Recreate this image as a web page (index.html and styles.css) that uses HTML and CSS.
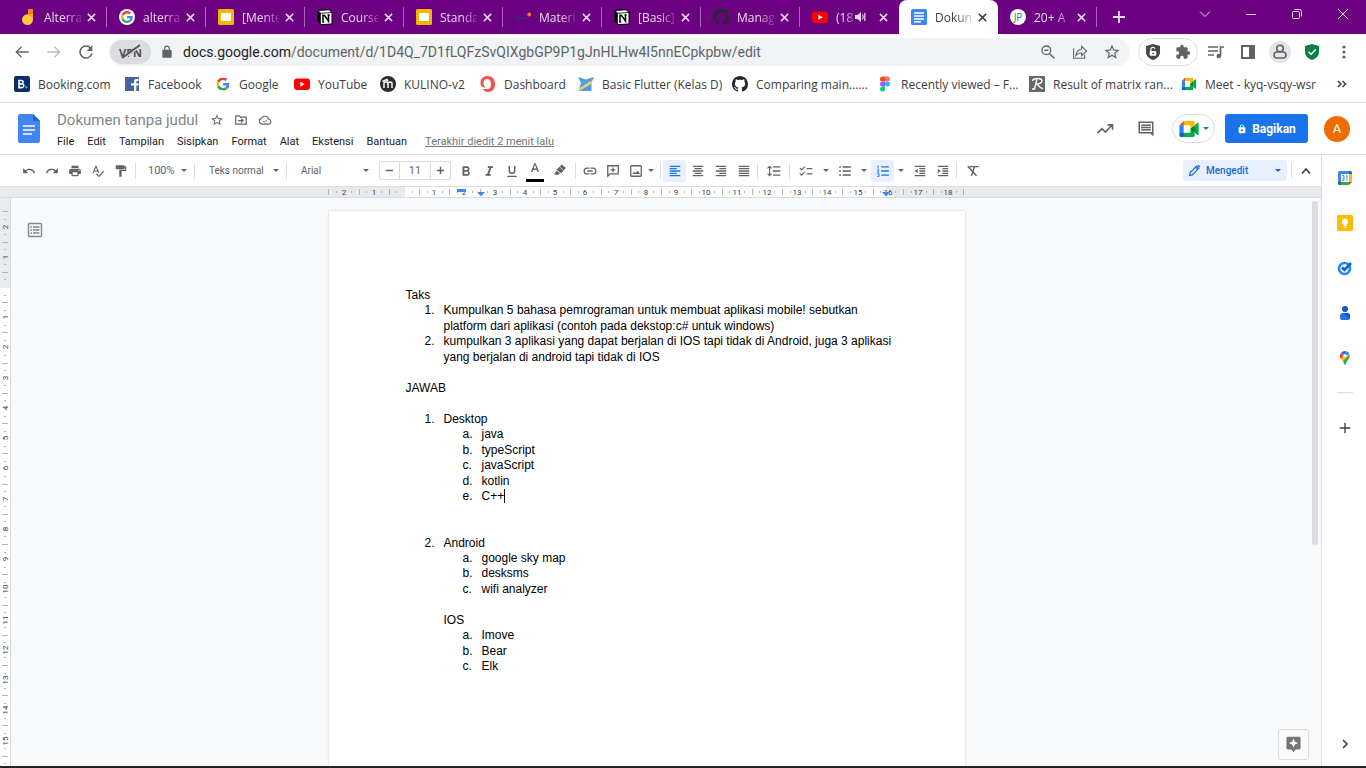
FILE: index.html
```html
<!DOCTYPE html>
<html lang="id">
<head>
<meta charset="utf-8">
<title>Dokumen tanpa judul</title>
<link rel="stylesheet" href="styles.css">
</head>
<body>
<svg class="sprites" aria-hidden="true">
  <symbol id="close" viewBox="0 0 10 10"><path d="M1 1l8 8M9 1L1 9" stroke="currentColor" stroke-width="1.7"/></symbol>
  <symbol id="google" viewBox="0 0 48 48"><path fill="#EA4335" d="M24 9.500c3.500 0 6.700 1.200 9.200 3.600l6.900-6.900C35.900 2.400 30.500 0 24 0 14.600 0 6.500 5.400 2.600 13.200l8 6.200C12.400 13.700 17.700 9.500 24 9.500z"/><path fill="#4285F4" d="M47 24.600c0-1.600-.2-3.100-.4-4.600H24v9h12.900c-.6 3-2.300 5.500-4.800 7.200l7.700 6C44.400 38 47 31.800 47 24.600z"/><path fill="#FBBC05" d="M10.500 28.600A14.500 14.500 0 0 1 10.500 19.400l-8-6.200a24 24 0 0 0 0 21.600z"/><path fill="#34A853" d="M24 48c6.500 0 11.900-2.100 15.900-5.800l-7.700-6c-2.200 1.500-4.900 2.300-8.200 2.300-6.300 0-11.600-4.200-13.500-9.900l-8 6.200C6.500 42.600 14.600 48 24 48z"/></symbol>
  <symbol id="slides" viewBox="0 0 16 16"><rect width="16" height="16" rx="1.500" fill="#f4b400"/><rect x="3" y="4" width="10" height="8" fill="#fff"/></symbol>
  <symbol id="notion" viewBox="0 0 16 16"><path d="M1 2.200L2.500 1l9.500-.5L15 3v12l-11 .6L1 12.500z" fill="#fff" stroke="#000" stroke-width="1"/><path d="M1 2v10.500L3.800 15.600V4z" fill="#000"/><path d="M1 1.700L12 .8l3 2.700-11 .8z" fill="#fff" stroke="#000" stroke-width=".8"/><path d="M6 13V6.500h1.600l3.900 5.700V6.200M5.200 13h2M5.200 6.300h2M10.500 6h2.200" stroke="#000" stroke-width="1.500" fill="none"/></symbol>
  <symbol id="youtube" viewBox="0 0 16 16"><rect y="2.500" width="16" height="11.500" rx="3" fill="#f00"/><path d="M6.400 5.700v5l4.300-2.500z" fill="#fff"/></symbol>
  <symbol id="github" viewBox="0 0 16 16"><path fill="#24292f" d="M8 0C3.580 0 0 3.580 0 8c0 3.540 2.290 6.530 5.470 7.590.4.070.55-.17.55-.38 0-.19-.01-.82-.01-1.490-2.010.37-2.530-.49-2.690-.94-.09-.23-.48-.94-.82-1.130-.28-.15-.68-.52-.01-.53.63-.01 1.080.58 1.230.82.72 1.210 1.870.87 2.330.66.070-.52.280-.87.510-1.070-1.780-.2-3.640-.89-3.640-3.950 0-.87.310-1.590.82-2.150-.08-.2-.36-1.020.08-2.120 0 0 .67-.21 2.200.82.64-.18 1.320-.27 2-.27s1.360.09 2 .27c1.530-1.040 2.200-.82 2.200-.82.44 1.100.16 1.920.08 2.120.51.56.82 1.270.82 2.150 0 3.070-1.870 3.750-3.650 3.950.29.25.54.73.54 1.480 0 1.070-.01 1.930-.01 2.200 0 .21.150.46.550.38A8.010 8.010 0 0 0 16 8c0-4.420-3.580-8-8-8z"/></symbol>
  <symbol id="docs" viewBox="0 0 16 16"><rect width="16" height="16" rx="1.500" fill="#4285f4"/><path d="M3 4h10M3 7h10M3 10h10M3 12.800h7" stroke="#fff" stroke-width="1.400"/></symbol>
  <symbol id="meet" viewBox="0 0 24 20"><path fill="#00832d" d="M13.500 10l2.400 2.700 3.200 2 .6-4.700-.6-4.600-3.200 1.800z"/><path fill="#0066da" d="M0 14.500v4c0 .9.700 1.500 1.500 1.500h4l.9-3-.9-2.500-2.800-.9z"/><path fill="#e94235" d="M5.500 0L0 5.500l2.800.8 2.700-.8.900-2.800z"/><path fill="#2684fc" d="M0 5.500h5.500v9H0z"/><path fill="#00ac47" d="M22.600 2.400l-3.500 2.900v9.400l3.500 2.900c.6.400 1.400 0 1.400-.7V3c0-.7-.8-1.100-1.400-.6zM13.500 10v4.500h-8V20h12.100c.8 0 1.500-.7 1.500-1.500v-3.800z"/><path fill="#ffba00" d="M17.600 0H5.500v5.500h8V10l5.600-4.600V1.500c0-.8-.7-1.500-1.500-1.500z"/><path fill="#fff" d="M5.500 5.500h8v9h-8z"/></symbol>
  <symbol id="star" viewBox="0 0 24 24"><path fill="currentColor" d="M22 9.240l-7.190-.62L12 2 9.190 8.630 2 9.240l5.460 4.730L5.820 21 12 17.270 18.180 21l-1.630-7.030L22 9.240zM12 15.400l-3.760 2.270 1-4.280-3.320-2.880 4.380-.38L12 6.100l1.710 4.040 4.380.38-3.320 2.880 1 4.280L12 15.400z"/></symbol>
  <symbol id="lock" viewBox="0 0 24 24"><path fill="currentColor" d="M18 8h-1V6A5 5 0 0 0 7 6v2H6a2 2 0 0 0-2 2v10c0 1.100.9 2 2 2h12a2 2 0 0 0 2-2V10a2 2 0 0 0-2-2zM9 6a3 3 0 0 1 6 0v2H9z"/></symbol>
  <symbol id="share-lock" viewBox="0 0 24 24"><path fill="currentColor" fill-rule="evenodd" d="M18 8h-1V6A5 5 0 0 0 7 6v2H6a2 2 0 0 0-2 2v10c0 1.100.9 2 2 2h12a2 2 0 0 0 2-2V10a2 2 0 0 0-2-2zM9 6a3 3 0 0 1 6 0v2H9zM12 12.500a2.500 2.500 0 1 1 0 5 2.500 2.500 0 0 1 0-5z"/></symbol>
  <symbol id="add" viewBox="0 0 24 24"><path fill="currentColor" d="M20 13h-7v7h-2v-7H4v-2h7V4h2v7h7z"/></symbol>
</svg>

<header class="browser">
  <nav class="tabs" aria-label="Tab">
    <div class="tab"><svg class="fav" viewBox="0 0 16 16"><path d="M8 0h5v7L8 6z" fill="#ff7a1a"/><path d="M2 10.500A5.500 5.500 0 0 1 7.500 5.200H13v5.300a5.500 5.500 0 0 1-11 0z" fill="#fdc843"/><path d="M8 5.200h5v5z" fill="#ff9d2e"/></svg><span class="tab-title">Alterra</span><button aria-label="Tutup"><svg><use href="#close"/></svg></button></div>
    <div class="tab"><svg class="fav" viewBox="0 0 16 16"><circle cx="8" cy="8" r="8" fill="#fff"/><use href="#google" x="2" y="2" width="12" height="12"/></svg><span class="tab-title">alterra</span><button aria-label="Tutup"><svg><use href="#close"/></svg></button></div>
    <div class="tab"><svg class="fav"><use href="#slides"/></svg><span class="tab-title">[Mente</span><button aria-label="Tutup"><svg><use href="#close"/></svg></button></div>
    <div class="tab"><svg class="fav"><use href="#notion"/></svg><span class="tab-title">Course</span><button aria-label="Tutup"><svg><use href="#close"/></svg></button></div>
    <div class="tab"><svg class="fav"><use href="#slides"/></svg><span class="tab-title">Standa</span><button aria-label="Tutup"><svg><use href="#close"/></svg></button></div>
    <div class="tab"><svg class="fav" viewBox="0 0 16 16"><path d="M0 9h12" stroke="#3f2479" stroke-width="2.500" stroke-dasharray="2.500 .7"/><circle cx="14.200" cy="5.500" r="1.900" fill="#ff7a1a"/></svg><span class="tab-title">Materi</span><button aria-label="Tutup"><svg><use href="#close"/></svg></button></div>
    <div class="tab"><svg class="fav"><use href="#notion"/></svg><span class="tab-title">[Basic]</span><button aria-label="Tutup"><svg><use href="#close"/></svg></button></div>
    <div class="tab"><svg class="fav"><use href="#github"/></svg><span class="tab-title">Manag</span><button aria-label="Tutup"><svg><use href="#close"/></svg></button></div>
    <div class="tab tab-audio"><svg class="fav"><use href="#youtube"/></svg><span class="tab-title">(18</span><svg class="speaker" viewBox="0 0 12 12"><path d="M0 4h2.500L6 1v10L2.500 8H0z" fill="currentColor"/><path d="M7.500 3.500q1.600 2.500 0 5M9.800 2v8" stroke="currentColor" stroke-width="1.200" fill="none"/></svg><button aria-label="Tutup"><svg><use href="#close"/></svg></button></div>
    <div class="tab tab-active"><svg class="fav"><use href="#docs"/></svg><span class="tab-title">Dokun</span><button aria-label="Tutup"><svg><use href="#close"/></svg></button></div>
    <div class="tab"><span class="fav-jp">JP</span><span class="tab-title">20+ A</span><button aria-label="Tutup"><svg><use href="#close"/></svg></button></div>
    <button class="new-tab" aria-label="Tab baru"><svg viewBox="0 0 12 12"><path d="M6 0v12M0 6h12" stroke="currentColor" stroke-width="1.800"/></svg></button>
    <div class="window-controls">
      <button aria-label="Telusuri tab"><svg viewBox="0 0 12 12"><path d="M1 3.500l5 5 5-5" fill="none" stroke="currentColor"/></svg></button>
      <button aria-label="Minimalkan"><svg viewBox="0 0 12 12"><path d="M1 6.500h10" stroke="currentColor"/></svg></button>
      <button aria-label="Pulihkan"><svg viewBox="0 0 12 12"><rect x="1.500" y="3.500" width="7" height="7" rx="1" fill="none" stroke="currentColor"/><path d="M3.500 1.500h5a2 2 0 0 1 2 2v5" fill="none" stroke="currentColor"/></svg></button>
      <button aria-label="Tutup jendela"><svg viewBox="0 0 12 12"><path d="M1 1l10 10M11 1L1 11" stroke="currentColor"/></svg></button>
    </div>
  </nav>

  <div class="address-row">
    <button aria-label="Kembali"><svg viewBox="0 0 24 24"><path fill="currentColor" d="M22 11H5.830l6.200-6.200L10.600 3.400 2 12l8.600 8.600 1.400-1.400L5.830 13H22z"/></svg></button>
    <button class="faded" aria-label="Maju"><svg viewBox="0 0 24 24"><path fill="currentColor" d="M2 11h16.170l-6.200-6.200 1.430-1.400L22 12l-8.600 8.600-1.400-1.400 6.170-6.200H2z"/></svg></button>
    <button aria-label="Muat ulang"><svg viewBox="0 0 24 24"><path d="M18.800 6.200A9 9 0 1 0 20.800 14" fill="none" stroke="currentColor" stroke-width="2.300"/><path d="M21.500 2v8.500H13z" fill="currentColor"/></svg></button>
    <div class="omnibox">
      <button class="vpn" aria-label="VPN"><span>VPN</span><svg viewBox="0 0 24 16"><path d="M3 15L22 1" stroke="#dadce0" stroke-width="3"/><path d="M3 14L21 1" stroke="#4b4d51" stroke-width="1.600"/></svg></button>
      <svg class="lock"><use href="#lock"/></svg>
      <div class="url" role="textbox" aria-label="Alamat" contenteditable="true" spellcheck="false"><span>docs.google.com</span>/document/d/1D4Q_7D1fLQFzSvQIXgbGP9P1gJnHLHw4I5nnECpkpbw/edit</div>
      <button aria-label="Zoom"><svg viewBox="0 0 24 24"><circle cx="9.500" cy="9.500" r="6.500" fill="none" stroke="currentColor" stroke-width="2"/><path d="M6.500 9.500h6M14.500 14.500l7 7" stroke="currentColor" stroke-width="2.200"/></svg></button>
      <button aria-label="Bagikan halaman"><svg viewBox="0 0 24 24"><path d="M2.500 6.500v15H19v-5" fill="none" stroke="currentColor" stroke-width="1.600"/><path d="M14.500 3.500l7.500 7-7.500 7v-4c-4 0-6.500.8-8.500 3.500.6-5 3.500-8.800 8.500-9.500z" fill="none" stroke="currentColor" stroke-width="1.600"/></svg></button>
      <button aria-label="Tandai halaman"><svg class="large"><use href="#star"/></svg></button>
    </div>
    <div class="extension-pill">
      <button aria-label="Pemblokir"><svg viewBox="0 0 16 16"><path d="M8 0l7 2v6c0 4-3 6.500-7 8-4-1.500-7-4-7-8V2z" fill="#44474b"/><rect x="4.700" y="7" width="6.600" height="4.800" rx="1" fill="#fff"/><path d="M5.800 7V5.500a2.200 2.200 0 0 1 4.200-.8" fill="none" stroke="#fff" stroke-width="1.200"/><path d="M7 9.400h2" stroke="#44474b"/></svg></button>
      <button aria-label="Ekstensi"><svg viewBox="0 0 24 24"><path fill="currentColor" d="M20.500 11H19V7c0-1.100-.9-2-2-2h-4V3.500a2.500 2.500 0 0 0-5 0V5H4a2 2 0 0 0-2 2v3.800h1.500a2.700 2.700 0 0 1 0 5.400H2V20c0 1.100.9 2 2 2h3.800v-1.500a2.700 2.700 0 0 1 5.400 0V22H17a2 2 0 0 0 2-2v-4h1.500a2.500 2.500 0 0 0 0-5z"/></svg></button>
    </div>
    <div class="browser-actions">
      <button aria-label="Media"><svg viewBox="0 0 16 16"><path d="M0 3h10M0 7h10M0 11h6" stroke="currentColor" stroke-width="1.700"/><path d="M12.500 12V3H16" fill="none" stroke="currentColor" stroke-width="1.700"/><circle cx="10.800" cy="12" r="2.300" fill="currentColor"/></svg></button>
      <button aria-label="Panel samping"><svg viewBox="0 0 16 16"><rect x="2" y="2" width="12" height="12" fill="none" stroke="currentColor" stroke-width="2"/><path d="M9 2h5v12H9z" fill="currentColor"/></svg></button>
      <button aria-label="Profil"><svg class="profile" viewBox="0 0 22 22"><circle cx="11" cy="11" r="11" fill="#e3e4e8"/><circle cx="11" cy="7.500" r="3.300" fill="none" stroke="currentColor" stroke-width="1.600"/><rect x="5" y="11" width="12" height="6" rx="3" fill="none" stroke="currentColor" stroke-width="1.600"/></svg></button>
      <button aria-label="Perlindungan"><svg viewBox="0 0 16 16"><path d="M8 0l7 2v6c0 4-3 6.500-7 8-4-1.500-7-4-7-8V2z" fill="#0b8043"/><path d="M4.500 7.700l2.600 2.600 4.500-4.700" fill="none" stroke="#fff" stroke-width="1.500"/></svg></button>
      <button aria-label="Menu"><svg viewBox="0 0 16 16"><circle cx="8" cy="3" r="1.600" fill="currentColor"/><circle cx="8" cy="8" r="1.600" fill="currentColor"/><circle cx="8" cy="13" r="1.600" fill="currentColor"/></svg></button>
    </div>
  </div>

  <nav class="bookmarks" aria-label="Bookmark">
    <a href="#"><svg viewBox="0 0 16 16"><rect width="16" height="16" rx="2" fill="#0c2c6b"/><path d="M5 4.500h2.400a1.600 1.600 0 0 1 0 3.400H5zm0 3.400h2.900a1.800 1.800 0 0 1 0 3.700H5z" fill="none" stroke="#fff" stroke-width="1.600"/><circle cx="12.300" cy="11.300" r="1.200" fill="#18a5f5"/></svg>Booking.com</a>
    <a href="#"><svg viewBox="0 0 16 16"><rect x="1" y="1" width="14" height="14" fill="#4862a3"/><path d="M10 15V9.500H7V7.200h3V5.800c0-2.200 1.300-3.300 4.500-3v2.100c-1.700-.1-2.200.2-2.200 1.200v1.100h2.200v2.300h-2.200V15z" fill="#fff"/></svg>Facebook</a>
    <a href="#"><svg viewBox="-5 -5 58 58"><use href="#google" width="48" height="48"/></svg>Google</a>
    <a href="#"><svg><use href="#youtube"/></svg>YouTube</a>
    <a href="#"><svg viewBox="0 0 16 16"><circle cx="8" cy="8" r="8" fill="#2b2b2b"/><path d="M4 12V7.500q0-1.500 2-1.500t2 1.500V12M8 7.500Q8 6 10 6t2 1.500V12M2.500 5.500L7 3.500l1 1.500" fill="none" stroke="#fff" stroke-width="1.500"/></svg>KULINO-v2</a>
    <a href="#"><svg viewBox="0 0 16 16"><path fill="#f0544a" fill-rule="evenodd" d="M7.500 0C12 0 15 3 15 8s-2.500 8-7 8c-3 0-4.500-1.500-5-3h4c3 0 4-2 4-5s-1.500-5-4-5-3.500 1.500-3.500 4 1 3.500 2 4.500C2 11.500.5 9.500.5 7 .5 3 3 0 7.500 0z"/></svg>Dashboard</a>
    <a href="#"><svg viewBox="0 0 16 16"><path d="M0 1l8 2.500L16 1l-2.500 5.500V15h-13L3 7z" fill="#4c9fe2"/><path d="M1 12.500L13.500 4.500v3.200L1 15z" fill="#f7cf70"/></svg>Basic Flutter (Kelas D)</a>
    <a href="#"><svg><use href="#github"/></svg>Comparing main......</a>
    <a href="#"><svg viewBox="0 0 16 16"><path d="M5.500.5H8v5H5.500a2.500 2.500 0 0 1 0-5z" fill="#f24e1e"/><path d="M8 .5h2.500a2.500 2.500 0 0 1 0 5H8z" fill="#ff7262"/><path d="M5.500 5.500H8v5H5.500a2.500 2.500 0 0 1 0-5z" fill="#a259ff"/><circle cx="10.500" cy="8" r="2.500" fill="#1abcfe"/><path d="M5.500 10.500H8V13a2.500 2.500 0 1 1-2.500-2.500z" fill="#0acf83"/></svg>Recently viewed – F...</a>
    <a href="#"><svg viewBox="0 0 16 16"><rect width="16" height="16" fill="#66676b"/><path d="M3.500 5C3.500 3 6 2.500 9 2.500S13 3.500 13 5 10.500 8 7.500 8c2 0 3 5 6.500 4.500M8 3L5.500 13H3" fill="none" stroke="#fff" stroke-width="1.400"/></svg>Result of matrix ran...</a>
    <a href="#"><svg viewBox="-1 -3 26 26"><use href="#meet" width="24" height="20"/></svg>Meet - kyq-vsqy-wsr</a>
    <button aria-label="Bookmark lainnya"><svg viewBox="0 0 12 12"><path d="M2 3l3 3-3 3M6.500 3l3 3-3 3" fill="none" stroke="currentColor" stroke-width="1.500"/></svg></button>
  </nav>
</header>

<header class="doc-header">
  <svg class="doc-logo" viewBox="0 0 22 29"><path d="M2 0h13l7 7v20a2 2 0 0 1-2 2H2a2 2 0 0 1-2-2V2a2 2 0 0 1 2-2z" fill="#4285f4"/><path d="M15 0l7 7h-7z" fill="#1967d2"/><path d="M5 12h12M5 16h12M5 20h9" stroke="#fff" stroke-width="1.600"/></svg>
  <div class="doc-heading">
    <div class="title-row">
      <input class="doc-title" type="text" value="Dokumen tanpa judul" aria-label="Nama dokumen" spellcheck="false">
      <button aria-label="Bintangi"><svg><use href="#star"/></svg></button>
      <button aria-label="Pindahkan"><svg viewBox="0 0 24 24"><path d="M3 5h6l2 2h10v12H3z" fill="none" stroke="currentColor" stroke-width="2"/><path d="M7 13h7M12 9.500l3.500 3.500-3.500 3.500" fill="none" stroke="currentColor" stroke-width="2"/></svg></button>
      <button aria-label="Status dokumen"><svg viewBox="0 0 24 24"><path d="M7 19a5 5 0 0 1-1-9.800 6.500 6.500 0 0 1 12.200 1.300A4.300 4.300 0 0 1 18.500 19z" fill="none" stroke="currentColor" stroke-width="1.900"/><path d="M8.500 13.500l2.500 2.500 4.500-4.500" fill="none" stroke="currentColor" stroke-width="1.700"/></svg></button>
    </div>
    <nav class="menus">
      <button>File</button><button>Edit</button><button>Tampilan</button><button>Sisipkan</button><button>Format</button><button>Alat</button><button>Ekstensi</button><button>Bantuan</button>
      <a href="#">Terakhir diedit 2 menit lalu</a>
    </nav>
  </div>
  <div class="doc-actions">
    <button class="icon-action" aria-label="Aktivitas"><svg viewBox="0 0 24 24"><path d="M2 17.500l6-6 4.500 4.500L21 7M15.500 6.500H22V13" fill="none" stroke="currentColor" stroke-width="2.200"/></svg></button>
    <button class="icon-action" aria-label="Komentar"><svg viewBox="0 0 24 24"><path d="M2 2h20v20l-4-4H2z" fill="currentColor"/><path d="M4 4h16v12H4z" fill="#fff"/><path d="M5.500 7h13M5.500 10h13M5.500 13h13" stroke="currentColor" stroke-width="2"/></svg></button>
    <button class="meet-button" aria-label="Meet"><svg><use href="#meet"/></svg><i class="caret"></i></button>
    <button class="share"><svg><use href="#share-lock"/></svg>Bagikan</button>
    <button class="avatar" aria-label="Akun">A</button>
  </div>
</header>

<div class="app">
  <main class="editor">
    <div class="toolbar" role="toolbar" aria-label="Format">
      <button class="tool" aria-label="Urungkan"><svg viewBox="0 0 24 24"><path fill="currentColor" d="M12.500 8c-2.650 0-5.050.99-6.900 2.600L2 7v9h9l-3.620-3.620A7.970 7.970 0 0 1 20.080 16l2.370-.78A10.500 10.500 0 0 0 12.500 8z"/></svg></button>
      <button class="tool" aria-label="Ulangi"><svg viewBox="0 0 24 24"><path fill="currentColor" d="M18.400 10.600A10.450 10.450 0 0 0 1.540 15.220L3.900 16a8 8 0 0 1 12.720-3.620L13 16h9V7z"/></svg></button>
      <button class="tool" aria-label="Cetak"><svg viewBox="0 0 24 24"><path fill="currentColor" d="M19 8H5a3 3 0 0 0-3 3v6h4v4h12v-4h4v-6a3 3 0 0 0-3-3zm-3 11H8v-5h8zm3-7a1 1 0 1 1 0-2 1 1 0 0 1 0 2zM18 3H6v4h12z"/></svg></button>
      <button class="tool" aria-label="Ejaan"><svg viewBox="0 0 24 24"><path fill="currentColor" d="M12.450 16h2.090L9.430 3H7.570L2.460 16h2.090l1.120-3h5.640zm-6.020-5L8.500 5.480 10.570 11zm15.160.59l-8.090 8.090L9.830 16l-1.410 1.410 5.090 5.090L23 13z"/></svg></button>
      <button class="tool" aria-label="Cat format"><svg viewBox="0 0 24 24"><path fill="currentColor" d="M18 4V3a1 1 0 0 0-1-1H4a1 1 0 0 0-1 1v5a1 1 0 0 0 1 1h13a1 1 0 0 0 1-1V6h1v4H9v11a1 1 0 0 0 1 1h2a1 1 0 0 0 1-1v-9h8V4z"/></svg></button>
      <i class="sep sep-first"></i>
      <label class="picker picker-zoom"><select aria-label="Zoom"><option>100%</option></select><i class="caret"></i></label>
      <i class="sep"></i>
      <label class="picker picker-style"><select aria-label="Gaya"><option>Teks normal</option></select><i class="caret"></i></label>
      <i class="sep"></i>
      <label class="picker picker-font"><select aria-label="Font"><option>Arial</option></select><i class="caret"></i></label>
      <div class="font-size"><button aria-label="Perkecil"><svg viewBox="0 0 12 12"><path d="M2 6h8" stroke="currentColor" stroke-width="1.600"/></svg></button><input type="text" value="11" aria-label="Ukuran font"><button aria-label="Perbesar"><svg viewBox="0 0 12 12"><path d="M2 6h8M6 2v8" stroke="currentColor" stroke-width="1.600"/></svg></button></div>
      <button class="tool" aria-label="Tebal"><svg viewBox="0 0 24 24"><path fill="currentColor" d="M16.500 11.800A4.400 4.400 0 0 0 14.200 4H6v16h9a4.500 4.500 0 0 0 1.500-8.200zM9.300 6.800h4a1.700 1.700 0 0 1 0 3.400h-4zm4.500 10.400H9.300v-4.100h4.500a2 2 0 0 1 0 4.100z"/></svg></button>
      <button class="tool" aria-label="Miring"><svg viewBox="0 0 24 24"><path fill="currentColor" d="M10 4v2.800h2.600L8.900 17.200H6V20h9v-2.800h-2.700L16 6.800h3V4z"/></svg></button>
      <button class="tool" aria-label="Garis bawah"><svg viewBox="0 0 24 24"><path fill="currentColor" d="M12 17a6 6 0 0 0 6-6V3h-2.500v8a3.500 3.500 0 0 1-7 0V3H6v8a6 6 0 0 0 6 6zM4 20v2.200h16V20z"/></svg></button>
      <button class="tool text-color" aria-label="Warna teks"><svg viewBox="0 0 24 24"><path fill="currentColor" d="M10.800 2L5 17h2.500l1.300-3.500h6.400l1.300 3.500H19L13.200 2zM9.600 11.300L12 4.900l2.400 6.400z"/></svg></button>
      <button class="tool tool-list" aria-label="Sorot"><svg viewBox="0 0 24 24"><path d="M15 1l7 6-8 9-8-6z" fill="currentColor"/><path d="M12 5.500l5.500 5" stroke="#fff" stroke-width="1.200"/><path d="M6 11l6 5-3 2.500H2z" fill="currentColor"/></svg></button>
      <i class="sep"></i>
      <button class="tool" aria-label="Tautan"><svg viewBox="0 0 24 24"><path d="M11 7H7a5 5 0 0 0 0 10h4M13 7h4a5 5 0 0 1 0 10h-4M7.500 12h9" fill="none" stroke="currentColor" stroke-width="2.200"/></svg></button>
      <button class="tool" aria-label="Tambah komentar"><svg viewBox="0 0 24 24"><path d="M3 21V3h18v14H7z" fill="none" stroke="currentColor" stroke-width="2.200"/><path d="M12 6v8M8 10h8" stroke="currentColor" stroke-width="2.200"/></svg></button>
      <button class="tool tool-menu" aria-label="Gambar"><svg viewBox="0 0 24 24"><rect x="3" y="3" width="18" height="18" rx="1.500" fill="none" stroke="currentColor" stroke-width="2.200"/><path d="M6 17l3-4 2.500 2.500L15 11l4 6z" fill="currentColor"/></svg><i class="caret"></i></button>
      <i class="sep"></i>
      <button class="tool active" aria-label="Rata kiri"><svg viewBox="0 0 24 24"><path d="M3 4h18M3 8h12M3 12h18M3 16h12M3 20h18" stroke="currentColor" stroke-width="2.200"/></svg></button>
      <button class="tool" aria-label="Rata tengah"><svg viewBox="0 0 24 24"><path d="M3 4h18M6 8h12M3 12h18M6 16h12M3 20h18" stroke="currentColor" stroke-width="2.200"/></svg></button>
      <button class="tool" aria-label="Rata kanan"><svg viewBox="0 0 24 24"><path d="M3 4h18M9 8h12M3 12h18M9 16h12M3 20h18" stroke="currentColor" stroke-width="2.200"/></svg></button>
      <button class="tool" aria-label="Rata kiri-kanan"><svg viewBox="0 0 24 24"><path d="M3 4h18M3 8h18M3 12h18M3 16h18M3 20h18" stroke="currentColor" stroke-width="2.200"/></svg></button>
      <i class="sep"></i>
      <button class="tool tool-list" aria-label="Spasi baris"><svg viewBox="0 0 24 24"><path d="M10 5h13M10 12h13M10 19h13" stroke="currentColor" stroke-width="2.400"/><path d="M4.500 5v14M1 7.500L4.500 4 8 7.500M1 16.500L4.500 20 8 16.500" fill="none" stroke="currentColor" stroke-width="1.900"/></svg></button>
      <i class="sep"></i>
      <button class="tool tool-list" aria-label="Checklist"><svg viewBox="0 0 24 24"><path d="M13 8h10M13 17h10M1.500 7l3 3L10 4.500M1.500 16l3 3 5.500-5.500" fill="none" stroke="currentColor" stroke-width="2"/></svg></button>
      <button class="arrow" aria-label="Opsi checklist"><i class="caret"></i></button>
      <button class="tool tool-bullets" aria-label="Daftar berbutir"><svg viewBox="0 0 24 24"><path d="M8 5h14M8 12h14M8 19h14M2 5h3M2 12h3M2 19h3" stroke="currentColor" stroke-width="2.600"/></svg></button>
      <button class="arrow" aria-label="Opsi butir"><i class="caret"></i></button>
      <button class="tool active" aria-label="Daftar bernomor"><svg viewBox="0 0 24 24"><path d="M9 5h13M9 12h13M9 19h13" stroke="currentColor" stroke-width="2.400"/><path d="M2 3.500h1.800V8M2 10h3.200L2.500 14h3M2 16.500h3.300v5H2M3 19h2" fill="none" stroke="currentColor" stroke-width="1.400"/></svg></button>
      <button class="arrow" aria-label="Opsi nomor"><i class="caret"></i></button>
      <button class="tool" aria-label="Kurangi inden"><svg viewBox="0 0 24 24"><path d="M3 4h18M11 8h10M11 12h10M11 16h10M3 20h18" stroke="currentColor" stroke-width="2.200"/><path d="M3 12l5-4v8z" fill="currentColor"/></svg></button>
      <button class="tool" aria-label="Tambah inden"><svg viewBox="0 0 24 24"><path d="M3 4h18M11 8h10M11 12h10M11 16h10M3 20h18" stroke="currentColor" stroke-width="2.200"/><path d="M8 12L3 8v8z" fill="currentColor"/></svg></button>
      <i class="sep"></i>
      <button class="tool tool-list" aria-label="Hapus format"><svg viewBox="0 0 24 24"><path d="M6 4.500h16M14.500 5l-5 15M3 4l15 16" fill="none" stroke="currentColor" stroke-width="2.400"/></svg></button>
      <div class="mode-group">
        <label class="mode"><svg viewBox="0 0 24 24"><path d="M3 21l1-5L16 4l4 4L8 20zM14 6l4 4M18.500 2l3.500 3.500" fill="none" stroke="currentColor" stroke-width="2.200"/></svg><select aria-label="Mode"><option>Mengedit</option></select><i class="caret"></i></label>
        <i class="sep"></i>
        <button class="collapse" aria-label="Sembunyikan menu"><svg viewBox="0 0 12 12"><path d="M2 8.500l4-4.500 4 4.500" fill="none" stroke="currentColor" stroke-width="1.600"/></svg></button>
      </div>
    </div>
    <div class="ruler"><svg id="ruler-x" viewBox="0 0 636 10"></svg></div>
    <div class="workspace">
      <div class="ruler-side"><svg id="ruler-y" viewBox="0 0 10 568"></svg></div>
      <div class="canvas">
        <button class="outline" aria-label="Tampilkan kerangka"><svg viewBox="0 0 16 16"><rect x="1.500" y="1.500" width="13" height="13" rx="1" fill="none" stroke="currentColor" stroke-width="1.400"/><path d="M6 5h6.500M6 8h6.500M6 11h6.500M3.500 5H5M3.500 8H5M3.500 11H5" stroke="currentColor" stroke-width="1.300"/></svg></button>
        <article class="page">
          <p>Taks</p>
          <ol>
            <li>Kumpulkan 5 bahasa pemrograman untuk membuat aplikasi mobile! sebutkan platform dari aplikasi (contoh pada dekstop:c# untuk windows)</li>
            <li>kumpulkan 3 aplikasi yang dapat berjalan di IOS tapi tidak di Android, juga 3 aplikasi yang berjalan di android tapi tidak di IOS</li>
          </ol>
          <p><br></p>
          <p>JAWAB</p>
          <p><br></p>
          <ol>
            <li>Desktop
              <ol class="letters"><li>java</li><li>typeScript</li><li>javaScript</li><li>kotlin</li><li>C++<i class="cursor"></i></li></ol>
              <p><br></p>
              <p><br></p>
            </li>
            <li>Android
              <ol class="letters"><li>google sky map</li><li>desksms</li><li>wifi analyzer</li></ol>
              <p><br></p>
              <p>IOS</p>
              <ol class="letters"><li>Imove</li><li>Bear</li><li>Elk</li></ol>
            </li>
          </ol>
        </article>
        <i class="scrollbar"></i>
        <button class="explore" aria-label="Jelajahi"><svg viewBox="0 0 24 24"><path d="M4 1h16a2 2 0 0 1 2 2v14a2 2 0 0 1-2 2h-5l-3 4-3-4H4a2 2 0 0 1-2-2V3a2 2 0 0 1 2-2z" fill="#757575"/><path d="M12 3.500l1.900 4.600 4.600 1.900-4.600 1.900L12 16.500l-1.900-4.600L5.500 10l4.600-1.900z" fill="#fff"/></svg></button>
      </div>
    </div>
  </main>

  <aside class="side-panel">
    <button aria-label="Kalender"><svg viewBox="0 0 16 16"><path d="M1 2.500A1.500 1.500 0 0 1 2.500 1H12v3H4v8H1z" fill="#4285f4"/><path d="M12 1h1.500A1.500 1.500 0 0 1 15 2.500V4h-3z" fill="#1967d2"/><path d="M12 4h3v8h-3z" fill="#fbbc04"/><path d="M4 12h8v3H4z" fill="#34a853"/><path d="M1 12h3v3H2.500A1.500 1.500 0 0 1 1 13.500z" fill="#188038"/><path d="M12 12h3l-3 3z" fill="#ea4335"/><path d="M4 4h8v8H4z" fill="#fff"/><path d="M5 5.700h2v4.600H5M5.500 8H7M9 6l1-.3v4.800" fill="none" stroke="#4285f4"/></svg></button>
    <button aria-label="Keep"><svg viewBox="0 0 16 16"><rect width="16" height="16" rx="1.500" fill="#fbbc04"/><path d="M8 3.500a3.200 3.200 0 0 1 1.500 6V11h-3V9.500a3.200 3.200 0 0 1 1.500-6zM6.500 11.700h3v1h-3z" fill="#fff"/></svg></button>
    <button aria-label="Tasks"><svg viewBox="0 0 16 16"><circle cx="7.500" cy="8.500" r="5.500" fill="none" stroke="#2684fc" stroke-width="2.600"/><path d="M5 7.500l2.500 2.500L14 3" fill="none" stroke="#0066da" stroke-width="2.600"/></svg></button>
    <button aria-label="Kontak"><svg viewBox="0 0 16 16"><circle cx="8" cy="4" r="3" fill="#0b57d0"/><path d="M3 11a3 3 0 0 1 3-3h4a3 3 0 0 1 3 3v2a2 2 0 0 1-2 2H5a2 2 0 0 1-2-2z" fill="#2b6fe0"/><path d="M6 8h4a3 3 0 0 1 3 3v3z" fill="#0b57d0"/></svg></button>
    <button aria-label="Maps"><svg viewBox="0 0 16 16"><path d="M8 1a4.800 4.800 0 0 0-4 2l4 3z" fill="#1a73e8"/><path d="M8 1a4.800 4.800 0 0 1 4.400 3L8 7z" fill="#4285f4"/><path d="M4 3a4.800 4.800 0 0 0 0 6l3-3.500z" fill="#ea4335"/><path d="M4 8.700L8.500 5l1.700 2.700-4.200 4z" fill="#fbbc04"/><path d="M12.400 4c1 2.600-.4 4.700-1.900 6.400C9.300 12 8.700 15 8 15s-1-2-2-3.500z" fill="#34a853"/><circle cx="8" cy="5.800" r="1.800" fill="#fff"/></svg></button>
    <hr>
    <button class="add" aria-label="Dapatkan add-on"><svg><use href="#add"/></svg></button>
    <button class="hide-panel" aria-label="Sembunyikan panel"><svg viewBox="0 0 12 12"><path d="M4 2l4 4-4 4" fill="none" stroke="currentColor" stroke-width="1.600"/></svg></button>
  </aside>
</div>
<script src="ruler.js"></script>
</body>
</html>
```
FILE: styles.css
```css
* { box-sizing: border-box; }

body {
  margin: 0;
  height: 100vh;
  overflow: hidden;
  display: flex;
  flex-direction: column;
  background: #fff;
  border-bottom: 2px solid #242424;
  font: 12px Roboto, sans-serif;
  color: #202124;
}

button, select, input { font: inherit; color: inherit; margin: 0; padding: 0; border: 0; background: none; }
button { display: flex; align-items: center; justify-content: center; flex: none; }
svg { display: block; flex: none; width: 16px; height: 16px; }
.sprites { position: absolute; width: 0; height: 0; }

/* Browser frame */
.browser { flex: none; font-family: "Open Sans", "Noto Sans", sans-serif; color: #3c4043; border-bottom: 1px solid #dadce0; }

.tabs { display: flex; height: 34px; padding-left: 8px; background: #6b0080; color: #ecd9f2; }
.tab { flex: 0 1 99px; min-width: 0; display: flex; align-items: center; padding: 0 11px 0 12px; position: relative; }
.tab::after { content: ""; position: absolute; right: 0; top: 7px; width: 1px; height: 20px; background: #a66cb3; }
.tab-title { flex: 1; min-width: 0; padding-left: 8px; white-space: nowrap; -webkit-mask-image: linear-gradient(to right, #000 65%, rgba(0, 0, 0, 0.2)); mask-image: linear-gradient(to right, #000 65%, rgba(0, 0, 0, 0.2)); }
.tab button { margin-left: 6px; }
.tab button svg { width: 9px; height: 9px; }
.tab-audio::after, .tab-active::after { display: none; }
.tab-active { background: #fff; color: #3c4043; border-radius: 8px 8px 0 0; }
.speaker { width: 12px; height: 12px; margin-right: 6px; }
.fav-jp { flex: none; width: 16px; height: 16px; border-radius: 8px; background: #fff; color: #188a5a; font-size: 10px; line-height: 16px; text-align: center; }
.new-tab { width: 44px; }
.new-tab svg { width: 12px; height: 12px; }
.window-controls { margin-left: auto; height: 28px; display: flex; }
.window-controls button { width: 46px; }
.window-controls svg { width: 12px; height: 12px; }

.address-row { height: 36px; display: flex; align-items: center; padding: 0 6px; color: #5f6368; }
.address-row > button { width: 32px; }
.faded { color: #babcbe; }
.omnibox { flex: 1; min-width: 0; height: 28px; margin-left: 7px; padding-right: 2px; display: flex; align-items: center; border-radius: 14px; background: #f1f3f4; }
.omnibox > button { width: 32px; }
.omnibox .vpn { width: 41px; height: 24px; margin-left: 1px; border-radius: 12px; background: #dadce0; color: #4b4d51; font-size: 11px; font-weight: 700; display: grid; place-items: center; }
.vpn > * { grid-area: 1 / 1; }
.vpn svg { width: 24px; }
.omnibox .lock { width: 14px; height: 14px; margin: 0 9px; }
.large { width: 18px; height: 18px; }
.url { flex: 1; min-width: 0; overflow: hidden; white-space: nowrap; font: 14px/20px Roboto, sans-serif; outline: 0; }
.url span { color: #202124; }
.extension-pill { display: flex; justify-content: space-between; width: 60px; margin: 0 2px 0 8px; height: 28px; border: 1px solid #dadce0; border-radius: 14px; }
.extension-pill button { width: 28px; }
.browser-actions { display: flex; }
.browser-actions button { width: 32px; }
.browser-actions .profile { width: 22px; height: 22px; }

.bookmarks { height: 32px; padding: 0 18px 4px 14px; display: grid; grid-template-columns: 110px 91px 79px 86px 100px 98px 154px 145px 152px 152px 1fr auto; align-items: center; }
.bookmarks a { display: flex; align-items: center; gap: 8px; color: inherit; text-decoration: none; white-space: nowrap; }
.bookmarks button svg { width: 12px; height: 12px; }

/* Document header */
.doc-header { flex: none; height: 52px; display: flex; align-items: center; padding: 0 16px 0 18px; border-bottom: 1px solid #dadce0; }
.doc-logo { width: 22px; height: 29px; }
.doc-heading { margin-left: 17px; padding-top: 2px; }
.title-row { display: flex; align-items: center; gap: 10px; color: #5f6368; }
.title-row svg { width: 14px; height: 14px; }
.doc-title { width: 143px; height: 24px; font-size: 15px; color: #80868b; }
.menus { display: flex; gap: 13px; height: 20px; align-items: center; white-space: nowrap; font-size: 11px; }
.menus a { color: #70757a; margin-left: 5px; }
.doc-actions { margin-left: auto; display: flex; align-items: center; color: #5f6368; }
.icon-action { width: 41px; }
.icon-action svg { width: 18px; height: 18px; }
.meet-button { width: 43px; height: 29px; gap: 4px; margin: 0 10px 0 6px; border: 1px solid #dadce0; border-radius: 15px; color: #1a73e8; }
.meet-button svg { width: 20px; height: 16px; }
.share { width: 83px; height: 29px; gap: 5px; border-radius: 3px; background: #1a73e8; color: #fff; font-weight: 700; }
.share svg { width: 10px; height: 10px; }
.avatar { width: 26px; height: 26px; margin-left: 16px; border-radius: 13px; background: #ef6c00; color: #fff; font-size: 13px; }

.caret { flex: none; width: 0; height: 0; border: 3px solid transparent; border-top-color: currentColor; border-bottom: 0; }

/* Editor */
.app { flex: 1; min-height: 0; display: flex; }
.editor { flex: 1; min-width: 0; display: flex; flex-direction: column; }
.toolbar { flex: none; height: 32px; display: flex; align-items: center; padding: 0 4px 0 17px; border-bottom: 1px solid #dadce0; font-size: 10px; color: #5f6368; }
.tool { width: 23px; height: 22px; border-radius: 2px; }
.tool svg { width: 14px; height: 14px; }
.tool.active { background: #e8f0fe; color: #1a73e8; }
.tool-menu { width: 34px; gap: 5px; }
.tool-list { width: 27px; }
.tool-bullets { width: 24px; }
.arrow { width: 14px; height: 22px; }
.text-color { border-bottom: 3px solid #000; border-radius: 0; width: 18px; margin: 0 2px 0 3px; }
.sep { flex: none; width: 1px; height: 16px; margin: 0 2px; background: #dadce0; }
.sep-first { margin-left: 3px; }
.picker { flex: none; height: 22px; display: grid; align-items: center; }
.picker > * { grid-area: 1 / 1; }
.picker .caret { justify-self: end; margin-right: 5px; pointer-events: none; }
.picker select, .mode select { appearance: none; width: 100%; }
.picker-zoom { width: 54px; padding-left: 10px; font-size: 11px; }
.picker-style { width: 87px; padding-left: 12px; }
.picker-font { width: 85px; padding-left: 12px; }
.font-size { flex: none; display: flex; height: 19px; margin: 0 3px 0 5px; border: 1px solid #dadce0; border-radius: 2px; font-size: 11px; }
.font-size button { width: 19px; }
.font-size svg { width: 11px; height: 11px; }
.font-size input { width: 32px; text-align: center; border: solid #dadce0; border-width: 0 1px; }
.mode-group { margin-left: auto; display: flex; align-items: center; }
.mode { width: 104px; height: 21px; display: flex; align-items: center; gap: 5px; padding: 0 6px 0 5px; border-radius: 3px; background: #e8f0fe; color: #1967d2; font-weight: 500; }
.mode svg { width: 13px; height: 13px; }
.mode select { flex: 1; min-width: 0; }
.mode-group .sep { margin: 0 2px 0 4px; }
.collapse { width: 23px; color: #3c4043; }
.collapse svg { width: 12px; height: 12px; }

.ruler { flex: none; height: 11px; display: flex; justify-content: center; padding-right: 29px; background: #e8eaed; border-bottom: 1px solid #dadce0; }
.ruler svg { width: 636px; height: 10px; overflow: visible; }
.ruler-side { flex: none; width: 11px; border-right: 1px solid #dadce0; overflow: hidden; }
.ruler-side svg { width: 10px; height: 568px; }

.workspace { flex: 1; min-height: 0; display: flex; }
.canvas { flex: 1; min-width: 0; position: relative; overflow: hidden; display: flex; justify-content: center; padding: 13px 39px 0 0; background: #f8f9fb; }
.outline { position: absolute; left: 16px; top: 24px; color: #80868b; }
.scrollbar { position: absolute; right: 3px; top: 3px; width: 6px; height: 344px; border-radius: 3px; background: #dadce0; }
.explore { position: absolute; right: 12px; bottom: 6px; width: 31px; height: 31px; border: 1px solid #dadce0; border-radius: 3px; background: #fafafa; }
.explore svg { width: 17px; height: 17px; }

.page { width: 636px; min-height: 900px; padding: 77px 66px 77px 77px; background: #fff; box-shadow: 0 0 2px #c8cacd; font: 12px/1.29 "Liberation Sans", Arial, sans-serif; color: #000; }
.page p { margin: 0; }
.page ol { list-style: none; margin: 0; padding-left: 38px; counter-reset: item; }
.page li { counter-increment: item; }
.page li::before { content: counter(item) "."; display: inline-block; width: 19px; margin-left: -19px; }
.page .letters > li::before { content: counter(item, lower-alpha) "."; }
.cursor { display: inline-block; width: 1px; height: 14px; background: #000; vertical-align: -3px; }

/* Side panel */
.side-panel { flex: none; width: 45px; display: flex; flex-direction: column; align-items: center; border-left: 1px solid #dadce0; padding-left: 2px; color: #3c4043; }
.side-panel button { width: 32px; height: 45px; }
.side-panel hr { width: 16px; height: 1px; margin: 12px 0; border: 0; background: #dadce0; }
.side-panel .hide-panel { margin-top: auto; }
.hide-panel svg { width: 12px; height: 12px; }
```
FILE: ruler.js
```js
const NS = "http://www.w3.org/2000/svg";
const CM = 30.24;

function add(parent, name, attrs, text) {
  const el = document.createElementNS(NS, name);
  for (const key in attrs) el.setAttribute(key, attrs[key]);
  if (text) el.textContent = text;
  parent.appendChild(el);
}

// Draws quarter-centimetre marks and centimetre numbers around a zero point.
function drawRuler(svg, zero, from, to, vertical) {
  for (let q = from * 4; q <= to * 4; q++) {
    const at = Math.round(zero + q * CM / 4);
    if (q % 4 === 0) {
      if (q === 0) continue;
      const attrs = { "font-size": 8, "font-family": "Roboto, sans-serif", "text-anchor": "middle", fill: "#3c4043" };
      if (vertical) attrs.transform = `translate(8 ${at}) rotate(-90)`;
      else Object.assign(attrs, { x: at, y: 8 });
      add(svg, "text", attrs, String(Math.abs(q / 4)));
    } else {
      const size = q % 2 === 0 ? 6 : 2;
      const start = size === 6 ? 2 : 4;
      add(svg, "rect", vertical
        ? { x: start, y: at, width: size, height: 1, fill: "#b0b3b8" }
        : { x: at, y: start, width: 1, height: size, fill: "#b0b3b8" });
    }
  }
}

const rx = document.getElementById("ruler-x");
add(rx, "rect", { x: 77, y: 0, width: 481, height: 10, fill: "#fff" });
drawRuler(rx, 76, -2.5, 18.5, false);
add(rx, "path", { d: "M129 2h9v3h-9zM149 5h8l-4 4.500zM554 5h8l-4 4.500z", fill: "#4285f4" });

const ry = document.getElementById("ruler-y");
add(ry, "rect", { x: 0, y: 0, width: 10, height: 90, fill: "#e8eaed" });
drawRuler(ry, 89, -2.5, 15.75, true);
```
